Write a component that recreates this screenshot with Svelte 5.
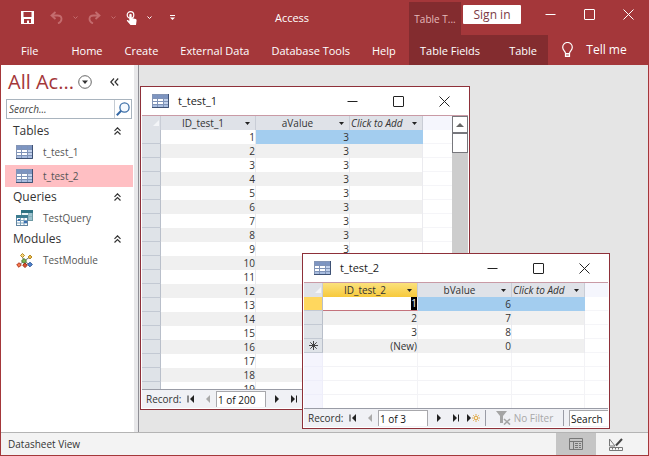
<script lang="ts">
  type Cell = number | string;
  type Row = { cells: Cell[]; current?: boolean; fresh?: boolean; blank?: boolean };

  const tabs = ['File', 'Home', 'Create', 'External Data', 'Database Tools', 'Help'];
  const contextTabs = ['Table Fields', 'Table'];

  const groups = [
    { name: 'Tables', icon: 'table', items: ['t_test_1', 't_test_2'] },
    { name: 'Queries', icon: 'query', items: ['TestQuery'] },
    { name: 'Modules', icon: 'module', items: ['TestModule'] },
  ];

  let selected = $state('t_test_2');
  let search = $state('');

  const firstRows: Row[] = Array.from({ length: 20 }, (_, i) => ({
    cells: [i + 1, 3],
    current: i === 0,
  }));

  const secondRows: Row[] = [
    { cells: [1, 6], current: true },
    { cells: [2, 7] },
    { cells: [3, 8] },
    { cells: ['(New)', 0], fresh: true },
    ...Array.from({ length: 5 }, () => ({ cells: ['', ''], blank: true })),
  ];

  const sheets = [
    { title: 't_test_1', x: 1, y: 21, w: 330, h: 324, columns: ['ID_test_1', 'aValue'], rows: firstRows, position: '1 of 200', active: false },
    { title: 't_test_2', x: 163, y: 188, w: 308, h: 176, columns: ['ID_test_2', 'bValue'], rows: secondRows, position: '1 of 3', active: true },
  ];
</script>

<svelte:head>
  <title>Access</title>
</svelte:head>

{#snippet tableIcon()}
  <svg class="icon" width="17" height="14" viewBox="0 0 17 14">
    <rect x="0.5" y="0.5" width="16" height="13" fill="#fff" stroke="#8495b5" />
    <rect x="1" y="1" width="15" height="3" fill="#7d95c2" />
    <path d="M11 4h5v9h-5z" fill="#c3d2ec" />
    <path d="M1 10h15v3h-15z" fill="#a9bddf" />
    <path d="M1 4.500h15M1 7.500h15M1 10.500h15M5.500 1v12M11.500 1v12" stroke="#7f93b8" fill="none" />
    <path d="M16.500 0v13.500H0" stroke="#3f5275" fill="none" />
  </svg>
{/snippet}

{#snippet queryIcon()}
  <svg class="icon" width="17" height="16" viewBox="0 0 17 16">
    <rect x="5.500" y="0.500" width="11" height="10" fill="#e9f3f5" stroke="#6d9aa3" />
    <rect x="5" y="0" width="12" height="3" fill="#2e7282" />
    <path d="M13 3h3v7h-3z" fill="#9cc3cf" />
    <path d="M6 6.500h10M12.500 3v7" stroke="#88b0ba" />
    <rect x="0.500" y="5.500" width="11" height="10" fill="#fff" stroke="#6385a0" />
    <rect x="0" y="5" width="12" height="3" fill="#3d7d90" />
    <path d="M1 10.500h10M1 13h10M4.500 8v7M8 8v7" stroke="#7da4bd" />
    <path d="M2 9h2v2H2zM8 11h3v2H8z" fill="#3b6fb2" />
  </svg>
{/snippet}

{#snippet moduleIcon()}
  <svg class="icon" width="17" height="15" viewBox="0 0 17 15">
    <path d="M6 3l2 5-5 4M14 4L8 8l6 4M8 8l1 4" stroke="#6f6f6f" fill="none" />
    <path d="M4.500 2.500l2-2 2 2-2 2z" fill="#f5d67c" stroke="#b78a25" />
    <path d="M12 4l2-2 2 2-2 2z" fill="#e6b84a" stroke="#b78a25" />
    <path d="M5.500 8l2.500-2.500L10.500 8 8 10.500z" fill="#7db34e" stroke="#47772a" />
    <path d="M0.700 12L3 9.700 5.300 12 3 14.300z" fill="#f4774b" stroke="#b3361b" />
    <path d="M6.700 12.300L9 10l2.300 2.300L9 14.500z" fill="#d8502c" stroke="#a3321a" />
    <path d="M11.700 11.500L14 9.200l2.300 2.300-2.300 2.300z" fill="#4e83cc" stroke="#2a5395" />
  </svg>
{/snippet}

{#snippet windowButtons()}
  <button class="win-btn" aria-label="Minimize">
    <svg width="11" height="11" viewBox="0 0 11 11"><path d="M0.500 5.500h10" /></svg>
  </button>
  <button class="win-btn" aria-label="Maximize">
    <svg width="11" height="11" viewBox="0 0 11 11"><rect x="0.500" y="0.500" width="10" height="10" rx="0.500" /></svg>
  </button>
  <button class="win-btn" aria-label="Close">
    <svg width="11" height="11" viewBox="0 0 11 11"><path d="M0.500 0.500l10 10M10.500 0.500l-10 10" /></svg>
  </button>
{/snippet}

{#snippet smallChevron()}
  <svg width="5" height="4" viewBox="0 0 5 4"><path d="M0.500 0.500l2 2 2-2" fill="none" stroke="currentColor" /></svg>
{/snippet}

{#snippet columnHead(name: string)}
  <div class="head-cell">
    <span>{name}</span>
    <svg width="5" height="3" viewBox="0 0 5 3"><path d="M0 0h5L2.500 3z" fill="#222" /></svg>
  </div>
{/snippet}

<div class="app">
  <header>
    <div class="title-bar">
      <div class="quick">
        <button aria-label="Save">
          <svg width="13" height="13" viewBox="0 0 13 13">
            <path d="M0 0h13v13H0z" fill="#fff" />
            <path d="M2.500 1h8v5h-8zM3 8h7v4H8V9.500H6V12H3z" fill="#a4373a" />
          </svg>
        </button>
        <button class="dim undo" aria-label="Undo">
          <svg width="13" height="13" viewBox="0 0 13 13"><path d="M5.500 1l-4 3.500 4 3.500M2 4.500h5.500c5 0 5.500 5.500 0.500 8" fill="none" stroke="currentColor" stroke-width="1.800" /></svg>
        </button>
        <button class="dim" aria-label="Undo list">{@render smallChevron()}</button>
        <button class="dim" aria-label="Redo">
          <svg width="13" height="13" viewBox="0 0 13 13"><path d="M7.500 1l4 3.500-4 3.500M11 4.500H5.500c-5 0-5.500 5.500-0.500 8" fill="none" stroke="currentColor" stroke-width="1.800" /></svg>
        </button>
        <button class="dim" aria-label="Redo list">{@render smallChevron()}</button>
        <button aria-label="Touch mode">
          <svg width="11" height="14" viewBox="0 0 11 14">
            <circle cx="4.500" cy="4" r="3.300" fill="none" stroke="#fff" stroke-width="1.200" />
            <path d="M3.300 3.500q1.200-1.500 2.400 0V7l4 1q1 .3.900 1.500L10 14H4.500L.8 9.800q0-1 1-.8l1.500 1z" fill="#fff" />
          </svg>
        </button>
        <button aria-label="Touch list">{@render smallChevron()}</button>
        <button class="more" aria-label="Customize toolbar">
          <svg width="5" height="6" viewBox="0 0 5 6"><path d="M0 0.500h5" stroke="#fff" /><path d="M0 2.500h5L2.500 5z" fill="#fff" /></svg>
        </button>
      </div>
      <h1>Access</h1>
      <div class="context-label">Table T...</div>
      <button class="sign-in">Sign in</button>
      <div class="app-buttons">{@render windowButtons()}</div>
    </div>
    <div class="ribbon">
      <nav class="tabs">
        {#each tabs as tab}
          <button>{tab}</button>
        {/each}
      </nav>
      <nav class="context-tabs">
        {#each contextTabs as tab}
          <button>{tab}</button>
        {/each}
      </nav>
      <button class="tell-me">
        <svg width="11" height="16" viewBox="0 0 11 16" fill="none" stroke="#fff">
          <path d="M3.500 11.500C3.500 9 .7 8.500.7 5.300a4.800 4.800 0 0 1 9.600 0c0 3.200-2.800 3.700-2.800 6.200zM3.500 11.500v3h4v-3M3.500 13h4" stroke-width="1.200" />
        </svg>
        <span>Tell me</span>
      </button>
    </div>
  </header>

  <main>
    <aside>
      <div class="pane-title">
        <h2>All Ac...</h2>
        <button aria-label="Choose category">
          <svg width="14" height="14" viewBox="0 0 14 14"><circle cx="7" cy="7" r="6.300" fill="#fff" stroke="#666" /><path d="M4 5.500h6L7 9z" fill="#333" /></svg>
        </button>
        <button class="collapse" aria-label="Close pane">
          <svg width="9" height="8" viewBox="0 0 9 8"><path d="M4 0.500L0.800 4 4 7.500M8.200 0.500L5 4l3.200 3.500" fill="none" stroke="#333" stroke-width="1.200" /></svg>
        </button>
      </div>
      <div class="search">
        <input aria-label="Search objects" placeholder="Search..." bind:value={search} />
        <button aria-label="Search">
          <svg width="14" height="14" viewBox="0 0 14 14"><circle cx="8.500" cy="5.500" r="4.600" fill="#f4f9fe" stroke="#3c6fa8" stroke-width="1.300" /><path d="M5.200 8.800L0.800 13.200" stroke="#3468a5" stroke-width="2" /></svg>
        </button>
      </div>
      {#each groups as group}
        <button class="group">
          <span>{group.name}</span>
          <svg width="7" height="8" viewBox="0 0 7 8"><path d="M0.500 3.800l3-3 3 3M0.500 7.500l3-3 3 3" fill="none" stroke="#333" stroke-width="1.200" /></svg>
        </button>
        <ul>
          {#each group.items as item}
            <li>
              <button class="item" class:selected={selected === item} onclick={() => (selected = item)}>
                {#if group.icon === 'table'}
                  {@render tableIcon()}
                {:else if group.icon === 'query'}
                  {@render queryIcon()}
                {:else}
                  {@render moduleIcon()}
                {/if}
                <span>{item}</span>
              </button>
            </li>
          {/each}
        </ul>
      {/each}
    </aside>
    <div class="splitter"></div>

    <div class="desktop">
      {#each sheets as sheet (sheet.title)}
        <section class="window" class:active={sheet.active} style="left: {sheet.x}px; top: {sheet.y}px; width: {sheet.w}px; height: {sheet.h}px">
          <div class="window-title">
            {@render tableIcon()}
            <h3>{sheet.title}</h3>
            {@render windowButtons()}
          </div>
          <div class="sheet">
            <div class="grid">
              <table>
                <colgroup>
                  <col class="col-select" />
                  <col class="col-id" />
                  <col class="col-value" />
                  <col class="col-add" />
                  <col />
                </colgroup>
                <thead>
                  <tr>
                    <th class="corner" aria-label="Select all">
                      <svg width="6" height="6" viewBox="0 0 6 6"><path d="M6 0v6H0z" fill="#f4f5f8" /></svg>
                    </th>
                    {#each sheet.columns as column}
                      <th>{@render columnHead(column)}</th>
                    {/each}
                    <th class="add">{@render columnHead('Click to Add')}</th>
                    <th class="rest"></th>
                  </tr>
                </thead>
                <tbody>
                  {#each sheet.rows as row}
                    <tr class:current={row.current} class:blank={row.blank}>
                      <td class="selector">
                        {#if row.fresh}
                          <svg width="9" height="9" viewBox="0 0 9 9"><path d="M4.500 0v9M0 4.500h9M1.300 1.300l6.400 6.400M7.700 1.300L1.300 7.700" stroke="#444" /></svg>
                        {/if}
                      </td>
                      {#each row.cells as cell}
                        <td><span>{cell}</span></td>
                      {/each}
                      <td></td>
                      <td class="rest"></td>
                    </tr>
                  {/each}
                </tbody>
              </table>
            </div>
            {#if !sheet.active}
              <div class="scrollbar">
                <button aria-label="Scroll up">
                  <svg width="8" height="4" viewBox="0 0 8 4"><path d="M0 4h8L4 0z" fill="#666" /></svg>
                </button>
                <div class="thumb"></div>
              </div>
            {/if}
          </div>
          <div class="record-bar">
            <label for="record-{sheet.title}">Record:</label>
            <button aria-label="First record">
              <svg width="8" height="8" viewBox="0 0 8 8"><path d="M1 0.500v7" stroke="#222" /><path d="M7 0v8L3 4z" fill="#222" /></svg>
            </button>
            <button aria-label="Previous record">
              <svg width="8" height="8" viewBox="0 0 8 8"><path d="M6 0v8L2 4z" fill="#aaa" /></svg>
            </button>
            <input id="record-{sheet.title}" value={sheet.position} />
            <button class="next" aria-label="Next record">
              <svg width="8" height="8" viewBox="0 0 8 8"><path d="M2 0v8l4-4z" fill="#222" /></svg>
            </button>
            <button aria-label="Last record">
              <svg width="8" height="8" viewBox="0 0 8 8"><path d="M1 0v8l4-4z" fill="#222" /><path d="M6.500 0.500v7" stroke="#222" /></svg>
            </button>
            <button class="new" aria-label="New record">
              <svg width="13" height="8" viewBox="0 0 13 8">
                <path d="M0 0v8l4-4z" fill="#222" />
                <circle cx="9" cy="4" r="1.800" fill="#fff3cf" stroke="#dfa544" />
                <path d="M9 0v1.500M9 6.500V8M5 4h1.500M11.500 4H13M6.300 1.300l1 1M10.700 5.700l1 1M11.700 1.300l-1 1M7.300 5.700l-1 1" stroke="#dfa544" />
              </svg>
            </button>
            <button class="filter" disabled>
              <svg width="15" height="14" viewBox="0 0 15 14">
                <path d="M0 0h11L7 5v7H4V5z" fill="#a5a5a5" />
                <path d="M8 8l6 5.500M14 8l-6 5.500" stroke="#a5a5a5" stroke-width="1.600" />
              </svg>
              <span>No Filter</span>
            </button>
            <input class="find" aria-label="Search records" placeholder="Search" />
          </div>
        </section>
      {/each}
    </div>
  </main>

  <footer>
    <span>Datasheet View</span>
    <button class="view on" aria-label="Datasheet View">
      <svg width="14" height="12" viewBox="0 0 14 12" fill="none" stroke="#777"><path d="M0.500 0.500h13v11H0.500zM0.500 3.500h13M4.500 3.500v8M6 5.500h3M10 5.500h2M6 7.500h3M10 7.500h2M6 9.500h3M10 9.500h2" /></svg>
    </button>
    <button class="view" aria-label="Design View">
      <svg width="14" height="13" viewBox="0 0 14 13" fill="none" stroke="#777"><path d="M0.500 1v7L6 8zM0.500 9.500h13v3h-13zM3.500 10v1.500M6.500 10v1.500M9.500 10v1.500" /><path d="M13 1L7 7.500" stroke="#444" stroke-width="2" /></svg>
    </button>
  </footer>
</div>

<style>
  :global(body) {
    margin: 0;
  }

  .app {
    display: flex;
    flex-direction: column;
    min-height: 100vh;
    box-sizing: border-box;
    border: 1px solid #a4373a;
    border-top: 0;
    background: #e5e5e5;
    color: #333;
    font: 11px/16px 'Open Sans', 'Noto Sans', sans-serif;
  }

  button,
  input {
    margin: 0;
    padding: 0;
    border: 0;
    background: none;
    color: inherit;
    font: inherit;
  }

  button {
    display: flex;
    align-items: center;
    justify-content: center;
  }

  svg {
    display: block;
    flex: none;
  }

  h1,
  h2,
  h3,
  ul {
    margin: 0;
    padding: 0;
    font: inherit;
    list-style: none;
  }

  header {
    background: #a4373a;
    color: #fff;
  }

  .title-bar,
  .ribbon {
    display: flex;
  }

  .title-bar {
    height: 35px;
  }

  .quick {
    display: flex;
    align-items: center;
    gap: 10px;
    padding-left: 20px;
  }

  .quick .undo {
    margin-left: 6px;
  }

  .dim {
    color: #c46c6e;
  }

  .quick .more {
    margin-left: 8px;
  }

  h1 {
    flex: 1;
    padding-top: 10px;
    text-align: center;
  }

  .context-label {
    box-sizing: border-box;
    width: 52px;
    margin-top: 2px;
    padding-top: 9px;
    background: #832c2f;
    color: #e6b9ba;
    font-size: 10px;
    text-align: center;
  }

  .sign-in {
    width: 58px;
    height: 19px;
    margin: 5px 0 0 2px;
    border-radius: 1px;
    background: #fff;
    color: #7c3a44;
    font-size: 12px;
  }

  .app-buttons {
    display: flex;
    height: 29px;
    padding-left: 10px;
  }

  .win-btn {
    flex: none;
    width: 46px;
  }

  .app-buttons .win-btn {
    width: 39px;
  }

  .win-btn svg {
    fill: none;
    stroke: currentColor;
  }

  .ribbon {
    height: 30px;
  }

  .tabs {
    display: flex;
    flex: 1;
    padding-left: 9px;
  }

  .tabs button,
  .context-tabs button {
    padding: 2px 11px 0;
    white-space: nowrap;
  }

  .tabs button:first-child {
    margin-right: 11px;
  }

  .context-tabs {
    display: flex;
    justify-content: space-between;
    width: 139px;
    background: #832c2f;
  }

  .tell-me {
    gap: 13px;
    width: 100px;
    padding-right: 7px;
    box-sizing: border-box;
    font-size: 12px;
  }

  main {
    display: flex;
    flex: 1;
  }

  aside {
    width: 133px;
    background: #fff;
  }

  .pane-title {
    display: flex;
    align-items: center;
    height: 34px;
    padding-left: 7px;
  }

  h2 {
    width: 70px;
    color: #a4373a;
    font-size: 20px;
    line-height: 32px;
    white-space: nowrap;
  }

  .collapse {
    margin-left: 18px;
  }

  .search {
    display: flex;
    height: 18px;
    margin: 0 2px 2px 5px;
    border: 1px solid #a9b4be;
  }

  .search input {
    flex: 1;
    min-width: 0;
    padding-left: 2px;
    font-size: 10px;
    font-style: italic;
  }

  .search button {
    width: 17px;
    border-left: 1px solid #c5ccd3;
  }

  input::placeholder {
    color: #444;
    opacity: 1;
  }

  .group {
    justify-content: space-between;
    width: 100%;
    height: 20px;
    padding: 0 13px 0 12px;
    font-size: 12px;
  }

  li + li {
    margin-top: 2px;
  }

  .item {
    box-sizing: border-box;
    justify-content: flex-start;
    gap: 10px;
    width: 128px;
    height: 22px;
    margin-left: 4px;
    padding-left: 11px;
    color: #555;
    font-size: 10px;
  }

  .item.selected {
    background: #ffbfc3;
  }

  .splitter {
    width: 4px;
    border-right: 1px solid #909096;
    background: #e8e8ea;
  }

  .desktop {
    position: relative;
    flex: 1;
    overflow: hidden;
  }

  .window {
    position: absolute;
    display: flex;
    flex-direction: column;
    box-sizing: border-box;
    padding: 0 1px 1px;
    border: 1px solid #8e3039;
    background: #fff;
  }

  .window-title {
    display: flex;
    height: 28px;
    align-items: center;
    padding: 0 1px 0 10px;
    border-bottom: 1px solid #c99aa5;
    color: #222;
  }

  .window-title h3 {
    flex: 1;
    padding-left: 9px;
  }

  .window-title .win-btn {
    height: 28px;
  }

  .sheet {
    display: flex;
    flex: 1;
    min-height: 0;
  }

  .grid {
    flex: 1;
    overflow: hidden;
  }

  table {
    width: 100%;
    border-collapse: separate;
    border-spacing: 0;
    table-layout: fixed;
    font-size: 10px;
    line-height: 14px;
  }

  .col-select {
    width: 19px;
  }

  .col-id {
    width: 95px;
  }

  .col-value {
    width: 94px;
  }

  .col-add {
    width: 73px;
  }

  th,
  td {
    box-sizing: border-box;
    height: 14px;
    padding: 0;
    border-right: 1px solid #ebebef;
    text-align: right;
  }

  th {
    background: #dfe2e8;
    border-color: #c9cdd6;
    font-weight: normal;
  }

  .head-cell {
    display: flex;
    align-items: center;
    height: 14px;
    padding-right: 5px;
  }

  .head-cell span {
    flex: 1;
    text-align: center;
    white-space: nowrap;
  }

  .add .head-cell span {
    padding-left: 1px;
    font-style: italic;
    text-align: left;
  }

  .corner svg {
    margin-left: 11px;
  }

  .active th:nth-child(2) {
    background: linear-gradient(#fbe17c, #f7c93c);
  }

  tbody tr:nth-child(even) td {
    background: #f0f0f0;
  }

  tbody tr.current td:nth-child(n + 3) {
    border-right-color: #a3cdef;
    background: #a3cdef;
  }

  tbody tr td.selector {
    border-right-color: #b9bfca;
    border-bottom: 1px solid #c3c9d3;
    background: #dfe3e8;
  }

  .selector svg {
    margin: 0 auto;
  }

  .active tbody .current .selector {
    background: #ffd75e;
  }

  .active .current td:nth-child(2) {
    border-bottom: 1px solid #c4737c;
    line-height: 13px;
  }

  .active .current td:nth-child(2) span {
    display: inline-block;
    background: #000;
    color: #fff;
  }

  tbody tr.blank td {
    border-bottom: 1px solid #f3f3f6;
    border-right-color: #f3f3f6;
    background: #fff;
  }

  tbody tr.blank td.selector {
    border-color: #eeeefa;
    background: #f4f4fd;
  }

  thead tr th.rest {
    border: 0;
    background: #f5f6fd;
  }

  tbody tr td.rest,
  tbody tr:nth-child(even) td.rest,
  tbody tr.current td.rest:nth-child(n + 3) {
    border-right: 0;
    border-bottom: 1px solid #f5f5f8;
    background: #fff;
  }

  .scrollbar {
    width: 16px;
    background: #cdcdcd;
  }

  .scrollbar button,
  .thumb {
    box-sizing: border-box;
    width: 16px;
    height: 17px;
    border: 1px solid #77777c;
    background: #fff;
  }

  .thumb {
    height: 20px;
  }

  .record-bar {
    display: flex;
    flex: none;
    align-items: center;
    height: 18px;
    overflow: hidden;
    border-top: 1px solid #9a9ca6;
    background: #f0f1f5;
    font-size: 10px;
  }

  .record-bar label {
    width: 36px;
    padding-left: 4px;
  }

  .record-bar button {
    flex: none;
    width: 17px;
    height: 16px;
  }

  .record-bar input {
    box-sizing: border-box;
    width: 50px;
    height: 16px;
    padding-left: 1px;
    border: 1px solid #a8a8ac;
    border-bottom: 0;
    background: #fff;
    color: #111;
  }

  .record-bar .next {
    margin-left: 2px;
  }

  .record-bar .new {
    width: 18px;
  }

  .record-bar .filter {
    box-sizing: border-box;
    gap: 3px;
    width: 79px;
    margin-left: 3px;
    border: solid #9a9ca6;
    border-width: 0 1px;
    color: #a8a8a8;
    white-space: nowrap;
  }

  .record-bar .find {
    flex: 1;
    min-width: 0;
    margin-left: 5px;
    border-right: 0;
  }

  .record-bar .find::placeholder {
    color: #111;
  }

  footer {
    display: flex;
    align-items: center;
    height: 22px;
    padding-right: 12px;
    border-top: 1px solid #b4b4b4;
    background: #f3f3f3;
    font-size: 10px;
  }

  footer span {
    flex: 1;
    padding-left: 7px;
  }

  .view {
    width: 40px;
    height: 22px;
  }

  .view.on {
    background: #c5c5c5;
  }
</style>
